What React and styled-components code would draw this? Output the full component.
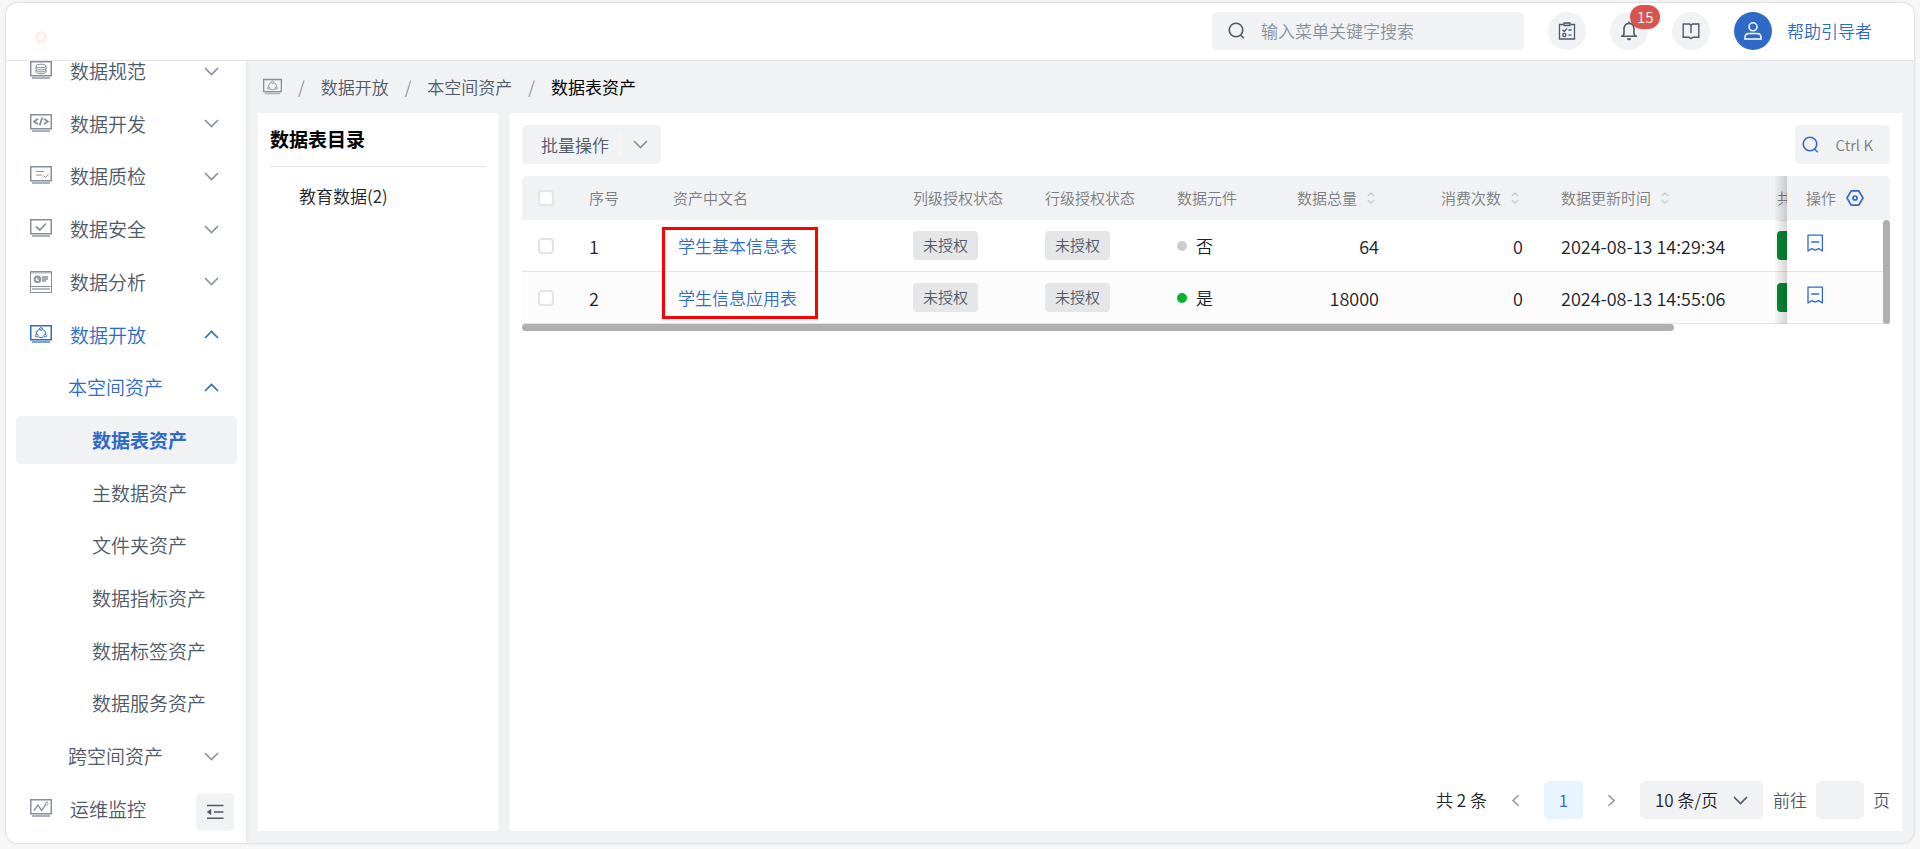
import React, { useState } from 'react';
import styled, { ThemeProvider, createGlobalStyle, css } from 'styled-components';

const theme = {
  colors: {
    primary: '#2f6ac8',
    text: '#1d2129',
    textSecondary: '#4e5969',
    textMuted: '#7a7d82',
    icon: '#86909c',
    fill: '#f1f2f4',
    border: '#e3e4ea',
    scrollbar: '#b0b0b0',
    success: '#00b42a',
    danger: '#d9534f'
  },
  fontSize: {
    sm: '15px',
    md: '17px',
    lg: '19px'
  },
  radius: '5px'
};

const GlobalStyle = createGlobalStyle`
  * {
    box-sizing: border-box;
  }

  body {
    margin: 0;
    background: #f7f7f7;
    color: ${props => props.theme.colors.text};
    font-family: 'Noto Sans CJK SC', sans-serif;
    font-size: ${props => props.theme.fontSize.md};
    font-weight: 350;
    line-height: 24px;
  }

  button, input, select {
    font: inherit;
    color: inherit;
    border: 0;
    padding: 0;
    margin: 0;
    background: none;
    outline: none;
  }

  button {
    cursor: pointer;
  }

  a {
    color: inherit;
    text-decoration: none;
  }

  svg {
    display: block;
    flex: none;
  }
`;

const Page = styled.div`
  display: flex;
  min-height: 100vh;
  padding: 3px 6px 6px;
`;

const Shell = styled.div`
  flex: 1;
  min-width: 0;
  display: flex;
  flex-direction: column;
  background: ${props => props.theme.colors.fill};
  border-radius: 12px;
  box-shadow: 0 0 2px 1px #dedee0;
  overflow: hidden;
`;

const Header = styled.header`
  position: relative;
  z-index: 2;
  height: 58px;
  display: flex;
  align-items: center;
  gap: 24px;
  padding: 0 42px 2px 29px;
  background: white;
  border-bottom: 1px solid ${props => props.theme.colors.border};
`;

const Logo = styled.a`
  margin-right: auto;
  padding-top: 12px;
`;

const SearchBox = styled.label`
  width: 312px;
  height: 38px;
  display: flex;
  align-items: center;
  gap: 16px;
  padding: 0 16px;
  border-radius: ${props => props.theme.radius};
  background: ${props => props.theme.colors.fill};
  color: ${props => props.theme.colors.textSecondary};

  input {
    flex: 1;
    min-width: 0;
  }

  input::placeholder {
    color: ${props => props.theme.colors.icon};
    opacity: 1;
  }
`;

const RoundButton = styled.button`
  position: relative;
  width: 38px;
  height: 38px;
  display: grid;
  place-items: center;
  border-radius: 50%;
  background: ${props => (props.$solid ? props.theme.colors.primary : props.theme.colors.fill)};
  color: ${props => (props.$solid ? 'white' : props.theme.colors.textSecondary)};
`;

const Badge = styled.span`
  position: absolute;
  top: -7px;
  left: 20px;
  padding: 0 7px;
  border-radius: 12px;
  background: ${props => props.theme.colors.danger};
  color: white;
  font-size: ${props => props.theme.fontSize.sm};
`;

const UserArea = styled.div`
  display: flex;
  align-items: center;
  gap: 15px;
  color: ${props => props.theme.colors.primary};
`;

const Body = styled.div`
  flex: 1;
  display: flex;
  min-height: 0;
`;

const Sidebar = styled.aside`
  position: relative;
  width: 240px;
  flex: none;
  display: flex;
  background: white;
  box-shadow: 1px 0 3px #e4e5e8;
`;

/* Scrolled slightly, the first entry slides under the header */
const Menu = styled.nav`
  flex: 1;
  display: flex;
  flex-direction: column;
  justify-content: space-between;
  margin-top: -14px;
  padding: 0 9px 10px 10px;
`;

const indents = { 0: '14px', 1: '52px', 2: '76px' };

const MenuItem = styled.a`
  height: 48px;
  display: flex;
  align-items: center;
  padding: 0 18px 0 ${props => indents[props.$level]};
  border-radius: ${props => props.theme.radius};
  font-size: ${props => props.theme.fontSize.lg};
  color: ${props => props.theme.colors.textSecondary};

  > svg {
    color: ${props => props.theme.colors.icon};
  }

  ${props => props.$open && css`
    &, > svg {
      color: ${props.theme.colors.primary};
    }
  `}

  ${props => props.$active && css`
    background: ${props.theme.colors.fill};
    color: ${props.theme.colors.primary};
    font-weight: 700;
  `}
`;

const MenuLabel = styled.span`
  flex: 1;
  margin-left: ${props => (props.$withIcon ? '18px' : 0)};
`;

const CollapseButton = styled.button`
  position: absolute;
  right: 12px;
  bottom: 12px;
  width: 38px;
  height: 38px;
  display: grid;
  place-items: center;
  border-radius: ${props => props.theme.radius};
  background: ${props => props.theme.colors.fill};
  color: ${props => props.theme.colors.textSecondary};
`;

const Content = styled.main`
  flex: 1;
  min-width: 0;
  display: flex;
  flex-direction: column;
  padding: 0 12px 12px;
`;

const Breadcrumb = styled.nav`
  height: 52px;
  display: flex;
  align-items: center;
  gap: 16px;
  padding-left: 5px;
  color: ${props => props.theme.colors.textSecondary};

  svg {
    color: ${props => props.theme.colors.icon};
  }

  strong {
    font-weight: 400;
    color: black;
  }
`;

const Slash = styled.span`
  color: ${props => props.theme.colors.icon};
`;

const Panels = styled.div`
  flex: 1;
  display: flex;
  gap: 12px;
`;

const TreePanel = styled.section`
  width: 240px;
  flex: none;
  padding: 12px;
  background: white;
`;

const TreeTitle = styled.h2`
  margin: 0;
  padding-bottom: 13px;
  border-bottom: 1px solid ${props => props.theme.colors.border};
  font-size: ${props => props.theme.fontSize.lg};
  line-height: 28px;
  color: black;
`;

const TreeNode = styled.a`
  display: block;
  padding: 17px 29px;
`;

const TablePanel = styled.section`
  flex: 1;
  min-width: 0;
  display: flex;
  flex-direction: column;
  padding: 12px;
  background: white;
`;

const Toolbar = styled.div`
  display: flex;
  justify-content: space-between;
  margin-bottom: 12px;
`;

const ToolButton = styled.button`
  height: 39px;
  display: flex;
  align-items: center;
  border-radius: ${props => props.theme.radius};
  background: ${props => props.theme.colors.fill};
`;

const BatchButton = styled(ToolButton)`
  padding: 0 13px 0 19px;
  color: ${props => props.theme.colors.textSecondary};

  span {
    padding-right: 11px;
    margin-right: 12px;
    border-right: 1px solid #fafafa;
  }

  svg {
    color: ${props => props.theme.colors.icon};
  }
`;

const QuickSearch = styled(ToolButton)`
  gap: 17px;
  padding: 0 17px 0 7px;
  font-size: ${props => props.theme.fontSize.sm};
  color: ${props => props.theme.colors.textMuted};

  svg {
    color: ${props => props.theme.colors.primary};
  }
`;

const TableFrame = styled.div`
  position: relative;
  border-radius: ${props => props.theme.radius} ${props => props.theme.radius} 0 0;
  overflow: hidden;
`;

const Table = styled.table`
  width: 1624px;
  table-layout: fixed;
  border-collapse: separate;
  border-spacing: 0;
`;

const HeadCell = styled.th`
  height: 44px;
  padding: 0 12px;
  background: ${props => props.theme.colors.fill};
  color: ${props => props.theme.colors.textMuted};
  font-size: ${props => props.theme.fontSize.sm};
  font-weight: 350;
  text-align: left;
  white-space: nowrap;
`;

const HeadContent = styled.div`
  display: flex;
  align-items: center;
  justify-content: ${props => (props.$end ? 'flex-end' : 'flex-start')};
  gap: 10px;
  padding-right: ${props => (props.$end ? '18px' : 0)};
`;

const Cell = styled.td`
  height: 52px;
  padding: 0 12px;
  background: ${props => (props.$striped ? '#fcfcfc' : 'white')};
  border-bottom: 1px solid ${props => props.theme.colors.border};
  white-space: nowrap;
`;

const NumberCell = styled(Cell)`
  font-size: 18px;
  text-align: ${props => (props.$end ? 'right' : 'left')};
  padding-right: ${props => (props.$end ? '26px' : '12px')};
`;

const pinned = css`
  position: sticky;
  right: 0;
  padding: 0 19px;

  &::before {
    content: '';
    position: absolute;
    top: 0;
    bottom: -1px;
    left: -12px;
    width: 12px;
    background: linear-gradient(to left, rgba(0, 0, 0, 0.16), rgba(0, 0, 0, 0.02));
  }
`;

const PinnedHeadCell = styled(HeadCell)`
  ${pinned}
`;

const PinnedCell = styled(Cell)`
  ${pinned}
`;

const Checkbox = styled.input`
  appearance: none;
  display: block;
  width: 16px;
  height: 16px;
  margin-left: 4px;
  border: 2px solid ${props => props.theme.colors.border};
  border-radius: 4px;
  background: white;

  &:checked {
    background: ${props => props.theme.colors.primary};
  }
`;

const AssetLink = styled.a`
  padding-left: 5px;
  color: ${props => props.theme.colors.primary};
`;

const Tag = styled.span`
  display: inline-block;
  height: 29px;
  padding: 0 10px;
  border-radius: 4px;
  background: #e5e6e8;
  color: ${props => props.theme.colors.textSecondary};
  font-size: ${props => props.theme.fontSize.sm};
  line-height: 28px;
  vertical-align: middle;
`;

const ShareTag = styled(Tag)`
  width: 66px;
  background: #058a32;
`;

const Status = styled.span`
  display: flex;
  align-items: center;
  gap: 9px;

  &::before {
    content: '';
    width: 10px;
    height: 10px;
    border-radius: 50%;
    background: ${props => (props.$on ? props.theme.colors.success : '#c9cdd4')};
  }
`;

const IconButton = styled.button`
  display: block;
  color: ${props => (props.$muted ? props.theme.colors.icon : props.theme.colors.primary)};
`;

const Highlight = styled.div`
  position: absolute;
  top: 51px;
  left: 140px;
  width: 156px;
  height: 92px;
  border: 3px solid #ff0000;
  pointer-events: none;
`;

const VerticalBar = styled.div`
  position: absolute;
  top: 44px;
  right: 0;
  bottom: 0;
  width: 7px;
  border-radius: 4px;
  background: ${props => props.theme.colors.scrollbar};
`;

const HorizontalBar = styled.div`
  width: 84.2%;
  height: 7px;
  border-radius: 4px;
  background: ${props => props.theme.colors.scrollbar};
`;

const Pagination = styled.nav`
  display: flex;
  align-items: center;
  justify-content: flex-end;
  gap: 10px;
  margin-top: auto;
`;

const Pager = styled.div`
  display: flex;
  align-items: center;
  gap: 22px;
  margin: 0 12px;
`;

const PageButton = styled.button`
  width: 39px;
  height: 38px;
  border-radius: ${props => props.theme.radius};
  background: #e8f4ff;
  color: ${props => props.theme.colors.primary};
`;

const SizePicker = styled.label`
  position: relative;
  display: flex;
  align-items: center;

  select {
    width: 123px;
    height: 38px;
    padding-left: 15px;
    appearance: none;
    border-radius: ${props => props.theme.radius};
    background: ${props => props.theme.colors.fill};
  }

  svg {
    position: absolute;
    right: 15px;
    color: ${props => props.theme.colors.textSecondary};
    pointer-events: none;
  }
`;

const JumpLabel = styled.label`
  display: flex;
  align-items: center;
  gap: 9px;
  color: ${props => props.theme.colors.textSecondary};

  input {
    width: 48px;
    height: 38px;
    border-radius: ${props => props.theme.radius};
    background: ${props => props.theme.colors.fill};
    text-align: center;
  }
`;

const Chevron = ({ dir = 'down', size = 15 }) => {
  const paths = {
    down: 'M1 4 L7.5 10.5 L14 4',
    up: 'M1 11 L7.5 4.5 L14 11',
    left: 'M11 1.5 L4.5 7.5 L11 13.5',
    right: 'M4 1.5 L10.5 7.5 L4 13.5'
  };
  return (
    <svg width={size} height={size} viewBox="0 0 15 15" fill="none" stroke="currentColor" strokeWidth="1.6">
      <path d={paths[dir]} />
    </svg>
  );
};

const SearchIcon = () => (
  <svg width="17" height="17" viewBox="0 0 17 17" fill="none" stroke="currentColor" strokeWidth="1.6">
    <circle cx="8" cy="8" r="6.8" />
    <path d="M12.5 13 L15.8 16.2" />
  </svg>
);

const screenGlyphs = {
  database: (
    <>
      <ellipse cx="11" cy="5" rx="5" ry="1.8" />
      <path d="M6 5 V10.7 C6 13.4 16 13.4 16 10.7 V5 M6 7.2 C6 9.5 16 9.5 16 7.2 M6 9 C6 11.5 16 11.5 16 9" />
    </>
  ),
  code: <path d="M8 4.7 L4.2 7.5 L8 10.2 M14 4.7 L17.8 7.5 L14 10.2 M12.3 3.5 L9.7 11.5" strokeWidth="1.9" />,
  quality: <path d="M6 5.5 H14 M6 9 H12 M13.5 9.5 L15.5 11.5 L18.5 8" />,
  shield: <path d="M6 7.5 L9.8 11 L16 4.5" strokeWidth="1.7" />,
  share: (
    <>
      <path d="M12.5 4.2 A5 5 0 0 1 15.8 9 M13.5 12 A5 5 0 0 1 8.5 12 M6.2 9 A5 5 0 0 1 9.5 4.2" />
      <circle cx="11" cy="4" r="1.4" />
      <circle cx="6.8" cy="10.7" r="1.4" />
      <circle cx="15.2" cy="10.7" r="1.4" />
    </>
  ),
  monitor: (
    <>
      <path d="M4 11.5 L8 6 L11.5 11.5 L15.5 5.8" strokeWidth="1.3" />
      <circle cx="16.6" cy="4.7" r="1.4" />
    </>
  )
};

const ScreenIcon = ({ name, size = 22 }) => {
  if (name === 'analysis') {
    return (
      <svg width={size} height={size} viewBox="0 0 22 22" fill="none" stroke="currentColor">
        <path d="M0.5 0.5 H21.5 V21.5 H0.5 Z M0.5 15.5 H21.5" />
        <path d="M1 1.5 H21 M2 18 H20" strokeWidth="2" opacity="0.6" />
        <circle cx="7.5" cy="8.2" r="2.8" strokeWidth="1.9" />
        <path d="M7.8 8.2 V5.5 M7.8 8.2 H10.8 M12 6 H18 M12 8 H18 M12 10 H16" strokeWidth="1.3" />
      </svg>
    );
  }
  return (
    <svg width={size} height={size} viewBox="0 -1 22 22" fill="none" stroke="currentColor">
      <path d="M0.75 0.75 H21.25 V14.75 H0.75 Z" strokeWidth="1.5" />
      <path d="M2 17 H20" strokeWidth="1.8" opacity="0.7" />
      {screenGlyphs[name]}
    </svg>
  );
};

const TaskIcon = () => (
  <svg width="18" height="18" viewBox="0 0 18 18" fill="none" stroke="currentColor" strokeWidth="1.3">
    <path d="M5.5 2.5 H1.5 V17 H16.5 V2.5 H12.5" />
    <path d="M6 1 H12 V3.6 H6 Z" fill="#b6bcc5" />
    <path d="M4.5 7.8 L6.3 9.5 L9 6.3 M10.5 8 H13.5 M10.5 13.2 H13.5" />
    <circle cx="6.3" cy="13" r="1.6" />
  </svg>
);

const BellIcon = () => (
  <svg width="18" height="20" viewBox="0 0 18 20" fill="none" stroke="currentColor" strokeWidth="1.6">
    <path d="M1 15.2 H17 M2.8 15 L4 12.8 V8 C4 4.6 6 2.4 9 2.4 C12 2.4 14 4.6 14 8 V12.8 L15.2 15 M9 2.4 V0.5" />
    <path d="M6.8 17.3 H11.2 C11 20 7 20 6.8 17.3 Z" fill="currentColor" stroke="none" />
  </svg>
);

const BookIcon = () => (
  <svg width="18" height="18" viewBox="0 0 18 18" fill="none" stroke="currentColor" strokeWidth="1.4">
    <path d="M9 11 V3.2 L7.5 2 H1.2 V15.3 H7 L9 16.6 L11 15.3 H16.8 V2 H10.5 L9 3.2" />
  </svg>
);

const UserIcon = () => (
  <svg width="18" height="18" viewBox="0 0 18 18" fill="none" stroke="currentColor" strokeWidth="1.5">
    <circle cx="9" cy="4.8" r="4" />
    <path d="M1 17 V15.4 C1 12.8 2.8 11.4 5.2 11.4 H12.8 C15.2 11.4 17 12.8 17 15.4 V17 Z" />
  </svg>
);

const CollapseIcon = () => (
  <svg width="18" height="16" viewBox="0 0 18 16" fill="none" stroke="currentColor" strokeWidth="1.6">
    <path d="M1 1.5 H17.5 M8 8 H17.5 M1 14.2 H17.5" />
    <path d="M5.2 4.8 V11.2 L0.8 8 Z" fill="currentColor" stroke="none" />
  </svg>
);

const LogoIcon = () => (
  <svg width="12" height="12" viewBox="0 0 12 12" fill="none">
    <circle cx="6" cy="6" r="6" fill="#ffeee6" />
    <path d="M3 3.6 L6 3 L9 3.6 C9 7 8 8.6 6 9.4 C4 8.6 3 7 3 3.6 Z" fill="white" />
  </svg>
);

const SortIcon = () => (
  <svg width="8" height="12" viewBox="0 0 8 12" fill="none" stroke="#c3c7ce" strokeWidth="1.1">
    <path d="M0.8 4 L4 0.8 L7.2 4 M0.8 8 L4 11.2 L7.2 8" />
  </svg>
);

const SettingIcon = () => (
  <svg width="18" height="16" viewBox="0 0 18 16" fill="none" stroke="currentColor" strokeWidth="1.7">
    <path d="M5.2 0.9 H12.8 L17 8 L12.8 15.1 H5.2 L1 8 Z" strokeLinejoin="round" />
    <circle cx="9" cy="8" r="2" />
  </svg>
);

const BookmarkIcon = () => (
  <svg width="18" height="24" viewBox="0 0 18 24" fill="none" stroke="currentColor" strokeWidth="1.3">
    <path d="M2 1.1 H16.4 V17 L12.6 14.6 L9.2 16.2 L5.8 14.6 L2 17 Z M5.2 8 H13.2" strokeLinejoin="round" />
  </svg>
);

const menuItems = [
  { label: '数据规范', level: 0, icon: 'database', arrow: 'down' },
  { label: '数据开发', level: 0, icon: 'code', arrow: 'down' },
  { label: '数据质检', level: 0, icon: 'quality', arrow: 'down' },
  { label: '数据安全', level: 0, icon: 'shield', arrow: 'down' },
  { label: '数据分析', level: 0, icon: 'analysis', arrow: 'down' },
  { label: '数据开放', level: 0, icon: 'share', arrow: 'up' },
  { label: '本空间资产', level: 1, arrow: 'up' },
  { label: '数据表资产', level: 2, active: true },
  { label: '主数据资产', level: 2 },
  { label: '文件夹资产', level: 2 },
  { label: '数据指标资产', level: 2 },
  { label: '数据标签资产', level: 2 },
  { label: '数据服务资产', level: 2 },
  { label: '跨空间资产', level: 1, arrow: 'down' },
  { label: '运维监控', level: 0, icon: 'monitor' }
];

const columns = [
  { title: '序号', width: 84 },
  { title: '资产中文名', width: 240 },
  { title: '列级授权状态', width: 132 },
  { title: '行级授权状态', width: 132 },
  { title: '数据元件', width: 120 },
  { title: '数据总量', width: 120, sortable: true, end: true },
  { title: '消费次数', width: 144, sortable: true, end: true },
  { title: '数据更新时间', width: 216, sortable: true },
  { title: '共', width: 278 }
];

const assets = [
  { id: 1, name: '学生基本信息表', isComponent: false, total: 64, used: 0, updatedAt: '2024-08-13 14:29:34' },
  { id: 2, name: '学生信息应用表', isComponent: true, total: 18000, used: 0, updatedAt: '2024-08-13 14:55:06' }
];

const AssetTable = () => {
  const [selected, setSelected] = useState([]);

  const toggle = (id) => {
    setSelected(selected.includes(id) ? selected.filter(item => item !== id) : [...selected, id]);
  };

  const toggleAll = () => {
    setSelected(selected.length === assets.length ? [] : assets.map(asset => asset.id));
  };

  return (
    <div>
      <TableFrame>
        <Table>
          <colgroup>
            <col width="55" />
            {columns.map(column => <col key={column.title} width={column.width} />)}
            <col width="103" />
          </colgroup>
          <thead>
            <tr>
              <HeadCell>
                <Checkbox
                  type="checkbox"
                  aria-label="全选"
                  checked={selected.length === assets.length}
                  onChange={toggleAll}
                />
              </HeadCell>
              {columns.map(column => (
                <HeadCell key={column.title}>
                  <HeadContent $end={column.end}>
                    {column.title}
                    {column.sortable && <SortIcon />}
                  </HeadContent>
                </HeadCell>
              ))}
              <PinnedHeadCell>
                <HeadContent>
                  操作
                  <IconButton aria-label="列设置"><SettingIcon /></IconButton>
                </HeadContent>
              </PinnedHeadCell>
            </tr>
          </thead>
          <tbody>
            {assets.map((asset, index) => {
              const striped = index % 2 === 1;
              return (
                <tr key={asset.id}>
                  <Cell $striped={striped}>
                    <Checkbox
                      type="checkbox"
                      aria-label={asset.name}
                      checked={selected.includes(asset.id)}
                      onChange={() => toggle(asset.id)}
                    />
                  </Cell>
                  <NumberCell $striped={striped}>{asset.id}</NumberCell>
                  <Cell $striped={striped}><AssetLink href="#">{asset.name}</AssetLink></Cell>
                  <Cell $striped={striped}><Tag>未授权</Tag></Cell>
                  <Cell $striped={striped}><Tag>未授权</Tag></Cell>
                  <Cell $striped={striped}>
                    <Status $on={asset.isComponent}>{asset.isComponent ? '是' : '否'}</Status>
                  </Cell>
                  <NumberCell $striped={striped} $end>{asset.total}</NumberCell>
                  <NumberCell $striped={striped} $end>{asset.used}</NumberCell>
                  <NumberCell $striped={striped}>{asset.updatedAt}</NumberCell>
                  <Cell $striped={striped}><ShareTag /></Cell>
                  <PinnedCell $striped={striped}>
                    <IconButton aria-label="收藏"><BookmarkIcon /></IconButton>
                  </PinnedCell>
                </tr>
              );
            })}
          </tbody>
        </Table>
        <Highlight />
        <VerticalBar />
      </TableFrame>
      <HorizontalBar />
    </div>
  );
};

const App = () => (
  <ThemeProvider theme={theme}>
    <GlobalStyle />
    <Page>
      <Shell>
        <Header>
          <Logo href="#" aria-label="首页"><LogoIcon /></Logo>
          <SearchBox>
            <SearchIcon />
            <input type="text" placeholder="输入菜单关键字搜索" />
          </SearchBox>
          <RoundButton aria-label="任务"><TaskIcon /></RoundButton>
          <RoundButton aria-label="消息">
            <BellIcon />
            <Badge>15</Badge>
          </RoundButton>
          <RoundButton aria-label="文档"><BookIcon /></RoundButton>
          <UserArea>
            <RoundButton $solid aria-label="用户"><UserIcon /></RoundButton>
            <a href="#">帮助引导者</a>
          </UserArea>
        </Header>

        <Body>
          <Sidebar>
            <Menu>
              {menuItems.map(item => (
                <MenuItem
                  key={item.label}
                  href="#"
                  $level={item.level}
                  $active={item.active}
                  $open={item.arrow === 'up'}
                >
                  {item.icon && <ScreenIcon name={item.icon} />}
                  <MenuLabel $withIcon={Boolean(item.icon)}>{item.label}</MenuLabel>
                  {item.arrow && <Chevron dir={item.arrow} />}
                </MenuItem>
              ))}
            </Menu>
            <CollapseButton aria-label="收起菜单"><CollapseIcon /></CollapseButton>
          </Sidebar>

          <Content>
            <Breadcrumb>
              <ScreenIcon name="share" size={19} />
              <Slash>/</Slash>
              <a href="#">数据开放</a>
              <Slash>/</Slash>
              <a href="#">本空间资产</a>
              <Slash>/</Slash>
              <strong>数据表资产</strong>
            </Breadcrumb>
            <Panels>
              <TreePanel>
                <TreeTitle>数据表目录</TreeTitle>
                <TreeNode href="#">教育数据(2)</TreeNode>
              </TreePanel>
              <TablePanel>
                <Toolbar>
                  <BatchButton>
                    <span>批量操作</span>
                    <Chevron />
                  </BatchButton>
                  <QuickSearch>
                    <SearchIcon />
                    Ctrl K
                  </QuickSearch>
                </Toolbar>
                <AssetTable />
                <Pagination>
                  <span>共 2 条</span>
                  <Pager>
                    <IconButton $muted aria-label="上一页"><Chevron dir="left" size={13} /></IconButton>
                    <PageButton>1</PageButton>
                    <IconButton $muted aria-label="下一页"><Chevron dir="right" size={13} /></IconButton>
                  </Pager>
                  <SizePicker>
                    <select aria-label="每页条数" defaultValue="10">
                      <option value="10">10 条/页</option>
                    </select>
                    <Chevron />
                  </SizePicker>
                  <JumpLabel>
                    前往
                    <input type="text" />
                    页
                  </JumpLabel>
                </Pagination>
              </TablePanel>
            </Panels>
          </Content>
        </Body>
      </Shell>
    </Page>
  </ThemeProvider>
);

export default App;
